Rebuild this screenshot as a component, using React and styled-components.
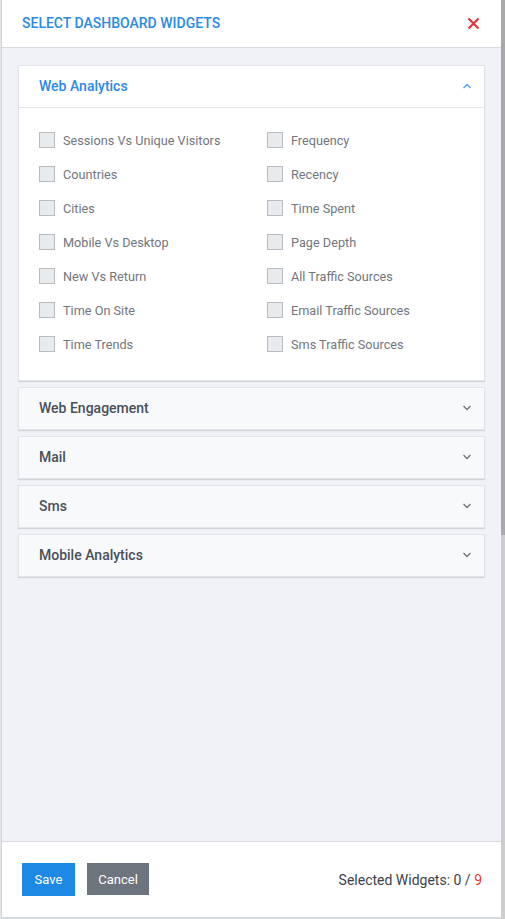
import React, { useState } from 'react'
import styled, { createGlobalStyle } from 'styled-components'

const Global = createGlobalStyle`
  html, body { margin: 0; padding: 0; }
  body { font-family: Roboto, "Liberation Sans", sans-serif; background: #fff; }
`

const Page = styled.div`
  display: flex;
  height: 919px;
  width: 505px;
  overflow: hidden;
`

const Backdrop = styled.div`
  width: 1px;
  background: #e4e6ea;
`

const Drawer = styled.div`
  flex: 1;
  display: flex;
  flex-direction: column;
  border-left: 1px solid #cfd3d9;
  border-bottom: 2px solid #d6d9de;
  background: #f0f2f7;
`

const Scrollbar = styled.div`
  width: 4px;
  display: flex;
  flex-direction: column;
  background: #cdcdcd;
`

const Thumb = styled.div`
  height: 535px;
  background: #a9a9a9;
`

const Header = styled.div`
  height: 47px;
  display: flex;
  align-items: center;
  justify-content: space-between;
  padding: 0 20px 0 20px;
  background: #fff;
  border-bottom: 1px solid #d5d9e0;
`

const Title = styled.h1`
  margin: 0 0 1px 0;
  font-size: 14px;
  font-weight: 500;
  color: #2a8ae4;
`

const Close = styled.button`
  border: 0;
  background: none;
  padding: 0;
  width: 14px;
  height: 14px;
  display: flex;
  cursor: pointer;
`

const Body = styled.div`
  flex: 1;
  padding: 17px 16px 0 16px;
  display: flex;
  flex-direction: column;
  gap: 6px;
`

const Card = styled.div`
  background: ${p => (p.$open ? '#fff' : '#f8f9fb')};
  border: 1px solid #e1e4e9;
  box-shadow: 0 1px 1px rgba(0, 0, 0, 0.12);
`

const CardHead = styled.div`
  height: ${p => (p.$open ? '42px' : '41px')};
  box-sizing: border-box;
  padding: 0 12px 1px 20px;
  display: flex;
  align-items: center;
  justify-content: space-between;
  font-size: 14px;
  font-weight: 500;
  color: ${p => (p.$open ? '#2a8ae4' : '#4a5057')};
  border-bottom: ${p => (p.$open ? '1px solid #e1e4e9' : '0')};
  cursor: pointer;
`

const Grid = styled.div`
  display: grid;
  grid-template-columns: 228px 1fr;
  row-gap: 18px;
  padding: 24px 20px 28px 20px;
`

const Option = styled.label`
  display: flex;
  align-items: center;
  gap: 8px;
  height: 16px;
  font-size: 12.7px;
  color: #72767c;
  cursor: pointer;
`

const Box = styled.span`
  width: 14px;
  height: 14px;
  background: #e8ebee;
  border: 1px solid #b8bcc2;
  flex: none;
`

const Footer = styled.div`
  height: 75px;
  display: flex;
  align-items: center;
  padding: 0 19px 0 20px;
  background: #fff;
  border-top: 1px solid #d5d9e0;
  gap: 12px;
`

const Button = styled.button`
  height: ${p => (p.$variant === 'primary' ? '33px' : '32px')};
  padding: 0 ${p => (p.$variant === 'primary' ? '12.5px' : '11.5px')};
  border: 0;
  font-family: Roboto, "Liberation Sans", sans-serif;
  font-size: 13px;
  color: #fff;
  background: ${p => (p.$variant === 'primary' ? '#1e88e5' : '#6c757d')};
  margin-bottom: ${p => (p.$variant === 'primary' ? '0' : '1px')};
  cursor: pointer;
`

const Count = styled.div`
  margin-left: auto;
  font-size: 14px;
  color: #3d4248;
`

const Red = styled.span`
  color: #e53935;
`

const Chevron = ({ up, color }) => (
  <svg width="10" height="6" viewBox="0 0 10 6" fill="none">
    <path
      d={up ? 'M1.5 5L5 1.5L8.5 5' : 'M1.5 1L5 4.5L8.5 1'}
      stroke={color}
      strokeWidth="1.3"
    />
  </svg>
)

const left = ['Sessions Vs Unique Visitors', 'Countries', 'Cities', 'Mobile Vs Desktop', 'New Vs Return', 'Time On Site', 'Time Trends']
const right = ['Frequency', 'Recency', 'Time Spent', 'Page Depth', 'All Traffic Sources', 'Email Traffic Sources', 'Sms Traffic Sources']
const sections = ['Web Analytics', 'Web Engagement', 'Mail', 'Sms', 'Mobile Analytics']

export default function App() {
  const [open, setOpen] = useState('Web Analytics')
  const items = left.flatMap((l, i) => [l, right[i]])

  return (
    <Page>
      <Global />
      <Backdrop />
      <Drawer>
        <Header>
          <Title>SELECT DASHBOARD WIDGETS</Title>
          <Close aria-label="close">
            <svg width="13" height="13" viewBox="0 0 13 13">
              <path d="M1.5 1.5L11.5 11.5M11.5 1.5L1.5 11.5" stroke="#e0353d" strokeWidth="2.2" />
            </svg>
          </Close>
        </Header>
        <Body>
          {sections.map(s => {
            const isOpen = open === s
            return (
              <Card key={s} $open={isOpen}>
                <CardHead $open={isOpen} onClick={() => setOpen(isOpen ? null : s)}>
                  {s}
                  <Chevron up={isOpen} color={isOpen ? '#4a9ff0' : '#70757c'} />
                </CardHead>
                {isOpen && (
                  <Grid>
                    {items.map(it => (
                      <Option key={it}>
                        <Box />
                        {it}
                      </Option>
                    ))}
                  </Grid>
                )}
              </Card>
            )
          })}
        </Body>
        <Footer>
          <Button $variant="primary">Save</Button>
          <Button>Cancel</Button>
          <Count>
            Selected Widgets: 0 / <Red>9</Red>
          </Count>
        </Footer>
      </Drawer>
      <Scrollbar>
        <Thumb />
      </Scrollbar>
    </Page>
  )
}
